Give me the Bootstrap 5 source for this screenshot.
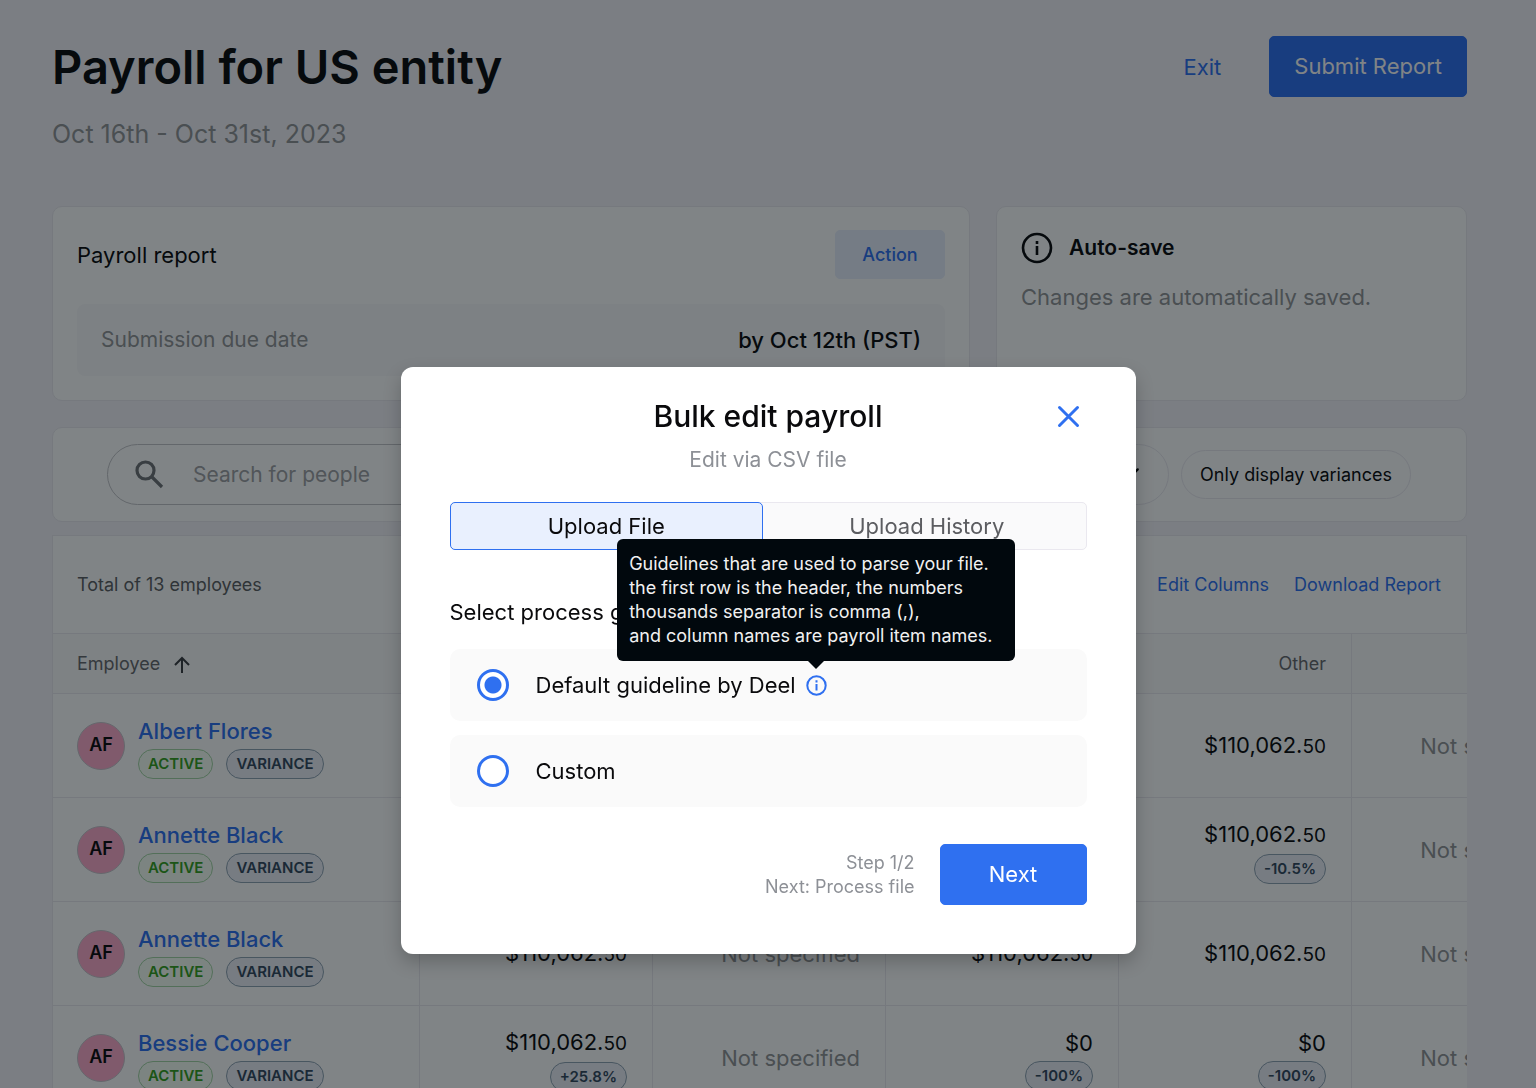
<!DOCTYPE html>
<html lang="en">
<head>
<meta charset="utf-8">
<meta name="viewport" content="width=device-width, initial-scale=1">
<title>Payroll for US entity</title>
<link href="https://cdn.jsdelivr.net/npm/bootstrap@5.3.0/dist/css/bootstrap.min.css" rel="stylesheet">
<style>
:root{--blue:#2f70f0;--line:#eae8ef;--muted:#939497;--ink:#0a0a0c}
body{font-family:Inter,"Liberation Sans",sans-serif;background:#f5f3f8;color:var(--ink);font-size:22px;line-height:24px;overflow:hidden}
a{color:var(--blue);text-decoration:none}
.page{padding:36px 69px 0 52px}
.page-title{font-size:47px;line-height:62px;font-weight:600;margin:0}
.period{font-size:25px;line-height:30px;color:var(--muted);margin:21px 0 57px}
.muted{color:var(--muted)}
.btn-main{--bs-btn-color:#fff;--bs-btn-bg:var(--blue);--bs-btn-border-color:var(--blue);--bs-btn-hover-bg:#1f5fdd;--bs-btn-hover-color:#fff;height:61px;font-size:22px;border-radius:5px;padding:0 24px}
.btn-soft{--bs-btn-color:var(--blue);--bs-btn-bg:#e8effc;--bs-btn-border-color:#e8effc;height:49px;width:110px;font-size:18px;font-weight:500;border-radius:5px}
.panel{background:#fff;border:1px solid var(--line);border-radius:10px}
.top-grid{display:grid;grid-template-columns:918fr 471fr;gap:26px}
.report-card{padding:23px 24px 24px}
.report-head{margin-bottom:25px}
.due-box{background:#f9f9fa;border-radius:8px;height:72px;padding:0 24px}
.due-box .muted{font-size:21px}
.note-card{padding:25px 24px 24px}
.note-title{font-size:21px;font-weight:600}
.note-text{margin:21px 0 0}
.find-bar{height:95px;padding:0 55px 0 54px;gap:12px;margin-top:26px}
.find-box{position:relative}
.find-box svg{position:absolute;left:26px;top:14px}
.find-box input{height:61px;border-radius:31px;border:1px solid #c4c4c8;padding:0 24px 0 85px;font-size:21px;background:#fff}
.find-box input::placeholder{color:#a0a1a4;opacity:1}
.pick{height:61px;width:250px;border-radius:31px;border-color:var(--line);padding-left:24px;font-size:18px;color:var(--ink);background-position:right 28px center;background-size:18px 18px;
--bs-form-select-bg-img:url("data:image/svg+xml,%3csvg xmlns='http://www.w3.org/2000/svg' viewBox='0 0 16 16'%3e%3cpath fill='none' stroke='%23000' stroke-width='2' stroke-linecap='round' d='m2 3 6 6 6-6'/%3e%3c/svg%3e")}
.pill{height:49px;border:1px solid var(--line);border-radius:25px;background:#fff;font-size:18px;padding:0 18px;color:var(--ink)}
.sheet{margin-top:13px;border:1px solid var(--line);border-right:0;background:#fff;overflow:hidden}
.sheet-top{height:97px;padding:0 25px 0 24px;gap:25px;font-size:18px;border-right:1px solid var(--line)}
.total{color:#5d5e62}
.pay{table-layout:fixed;width:1532px;border-collapse:separate;border-spacing:0}
.pay th{height:61px;background:#fafafb;font-weight:400;font-size:18px;color:#68696d;padding:0 25px 0 24px;border-top:1px solid var(--line);border-bottom:1px solid var(--line);border-right:1px solid var(--line);text-align:right}
.pay td{height:104px;padding:0 25px 0 24px;border-bottom:1px solid var(--line);border-right:1px solid var(--line);text-align:right;vertical-align:middle;line-height:36px}
.pay th:first-child,.pay td:first-child{text-align:left}
.cents{font-size:19px}
.person{gap:13px}
.tags{gap:13px}
.face{width:48px;height:48px;border-radius:50%;background:#ffabca;border:1px solid #c9c5cc;font-size:18px;font-weight:600;line-height:44px;text-align:center;flex:none}
.who{font-size:22px;font-weight:500;line-height:36px;display:block}
.chip{display:block;width:fit-content;height:30px;line-height:28px;border-radius:15px;border:1px solid #8fa2b3;background:#eceef6;color:#34495e;font-size:15px;font-weight:600;padding:0 9px}
.chip-on{border-color:#a5d5a5;background:#f6fff4;color:#36a01f}
.modal-backdrop{--bs-backdrop-bg:#01090d;--bs-backdrop-opacity:.5}
.edit-dialog{max-width:735px;margin:367px auto 0}
.edit-dialog .modal-content{border:0;border-radius:12px;padding:31px 49px 49px;box-shadow:0 8px 18px rgba(0,0,0,.22);color:var(--ink)}
.edit-title{font-size:30px;line-height:36px;font-weight:500;margin:0}
.edit-sub{font-size:21px;line-height:26px;margin:13px 0 29px;color:#8d9096}
.x-btn{position:absolute;right:56px;top:38px;width:23px;height:23px;border:0;background:none;padding:0;display:flex}
.tabs2{border:1px solid var(--line);border-radius:5px;background:#fafafb;height:48px}
.tabs2 button{flex:321 1 0;border:1px solid transparent;background:none;border-radius:5px;margin:-1px;color:#5c5d61;padding:0 0 0 6px}
.tabs2 button.on{flex-grow:315;padding:0;background:#e9f0fe;border-color:var(--blue);color:var(--ink)}
.ask{font-size:22px;line-height:26px;margin:49px 0 24px}
.choice{height:72px;border-radius:10px;background:#fafafa;padding:0 27px}
.choice + .choice{margin-top:14px}
.choice input{appearance:none;width:32px;height:32px;border:3px solid var(--blue);border-radius:50%;background:#fff;margin:0 27px 0 0;flex:none}
.choice input:checked{background:radial-gradient(circle,var(--blue) 0 8px,#fff 9px)}
.hint{position:relative;margin-left:10px;width:21px;height:21px;display:flex}
.hint-text{position:absolute;left:50%;bottom:35px;margin-left:-199px;width:398px;background:#01080d;color:#f1f1f1;border-radius:6px;padding:13px 12px;font-size:18px;line-height:24px;white-space:nowrap}
.hint-text::after{content:"";position:absolute;left:50%;top:100%;margin-left:-8px;border:8px solid transparent;border-top-color:#01080d;border-bottom:0}
.foot{margin-top:37px;gap:25px}
.step{font-size:18px;line-height:24px;text-align:right;color:#8d9096}
.foot .btn-main{width:147px}
</style>
</head>
<body>
<main class="page">
  <header class="d-flex justify-content-between align-items-start">
    <h1 class="page-title">Payroll for US entity</h1>
    <div class="d-flex align-items-center gap-5">
      <a href="#">Exit</a>
      <button type="button" class="btn btn-main">Submit Report</button>
    </div>
  </header>
  <p class="period">Oct 16th - Oct 31st, 2023</p>

  <div class="top-grid">
    <section class="panel report-card">
      <div class="report-head d-flex justify-content-between align-items-center">
        <span>Payroll report</span>
        <button type="button" class="btn btn-soft">Action</button>
      </div>
      <div class="due-box d-flex justify-content-between align-items-center">
        <span class="muted">Submission due date</span><span class="fw-medium due-day">by Oct 12th (PST)</span>
      </div>
    </section>
    <section class="panel note-card">
      <div class="d-flex align-items-center gap-3">
        <svg width="32" height="32" viewBox="0 0 32 32" fill="none" stroke="#0a0a0c" stroke-width="2.6"><circle cx="16" cy="16" r="14"/><path d="M16 14v9M16 9v3"/></svg>
        <span class="note-title">Auto-save</span>
      </div>
      <p class="muted note-text">Changes are automatically saved.</p>
    </section>
  </div>

  <section class="panel find-bar d-flex align-items-center">
    <div class="find-box flex-grow-1">
      <svg width="32" height="32" viewBox="0 0 32 32" fill="none" stroke="#707377" stroke-width="3.2"><circle cx="12.500" cy="12.500" r="8.500"/><path d="M18.500 18.500 29 29"/></svg>
      <input type="search" class="form-control" placeholder="Search for people" aria-label="Search for people">
    </div>
    <select class="form-select pick" aria-label="Filter"><option>All</option></select>
    <button type="button" class="pill">Only display variances</button>
  </section>

  <section class="sheet">
    <div class="sheet-top d-flex align-items-center">
      <span class="total me-auto">Total of 13 employees</span>
      <a href="#">Edit Columns</a><a href="#">Download Report</a>
    </div>
    <table class="pay">
      <colgroup><col style="width:367px"><col><col><col><col><col></colgroup>
      <thead><tr>
        <th>Employee <svg class="ms-2" width="18" height="18" viewBox="0 0 18 18" fill="none" stroke="#3b3c40" stroke-width="2"><path d="M9 17V2M2 9l7-7 7 7"/></svg></th>
        <th></th><th></th><th></th><th>Other</th><th></th>
      </tr></thead>
      <tbody>
      <tr><td><div class="d-flex align-items-center person"><div class="face">AF</div><div><a href="#" class="who">Albert Flores</a><div class="d-flex tags"><span class="chip chip-on">ACTIVE</span><span class="chip">VARIANCE</span></div></div></div></td>
        <td>$110,062.<span class="cents">50</span></td><td class="muted">Not specified</td><td>$110,062.<span class="cents">50</span></td><td>$110,062.<span class="cents">50</span></td><td class="muted">Not specified</td></tr>
      <tr><td><div class="d-flex align-items-center person"><div class="face">AF</div><div><a href="#" class="who">Annette Black</a><div class="d-flex tags"><span class="chip chip-on">ACTIVE</span><span class="chip">VARIANCE</span></div></div></div></td>
        <td>$110,062.<span class="cents">50</span></td><td class="muted">Not specified</td><td>$110,062.<span class="cents">50</span></td><td>$110,062.<span class="cents">50</span><span class="chip ms-auto">-10.5%</span></td><td class="muted">Not specified</td></tr>
      <tr><td><div class="d-flex align-items-center person"><div class="face">AF</div><div><a href="#" class="who">Annette Black</a><div class="d-flex tags"><span class="chip chip-on">ACTIVE</span><span class="chip">VARIANCE</span></div></div></div></td>
        <td>$110,062.<span class="cents">50</span></td><td class="muted">Not specified</td><td>$110,062.<span class="cents">50</span></td><td>$110,062.<span class="cents">50</span></td><td class="muted">Not specified</td></tr>
      <tr><td><div class="d-flex align-items-center person"><div class="face">AF</div><div><a href="#" class="who">Bessie Cooper</a><div class="d-flex tags"><span class="chip chip-on">ACTIVE</span><span class="chip">VARIANCE</span></div></div></div></td>
        <td>$110,062.<span class="cents">50</span><span class="chip ms-auto">+25.8%</span></td><td class="muted">Not specified</td><td>$0<span class="chip ms-auto">-100%</span></td><td>$0<span class="chip ms-auto">-100%</span></td><td class="muted">Not specified</td></tr>
      </tbody>
    </table>
  </section>
</main>

<div class="modal-backdrop show"></div>
<div class="modal d-block" tabindex="-1" role="dialog" aria-labelledby="editTitle">
  <div class="modal-dialog edit-dialog">
    <div class="modal-content">
      <button type="button" class="x-btn" aria-label="Close"><svg width="23" height="23" viewBox="0 0 23 23" stroke="#2f70f0" stroke-width="3" stroke-linecap="round"><path d="M2.500 2.500 20.500 20.500M20.500 2.500 2.500 20.500"/></svg></button>
      <h2 class="edit-title text-center" id="editTitle">Bulk edit payroll</h2>
      <p class="edit-sub text-center">Edit via CSV file</p>
      <div class="tabs2 d-flex" role="tablist">
        <button type="button" class="on" role="tab" aria-selected="true">Upload File</button>
        <button type="button" role="tab" aria-selected="false">Upload History</button>
      </div>
      <p class="ask">Select process guideline</p>
      <div class="choice d-flex align-items-center">
        <input type="radio" name="guide" id="g1" checked><label for="g1">Default guideline by Deel</label>
        <span class="hint"><svg width="21" height="21" viewBox="0 0 21 21" fill="none" stroke="#2f70f0" stroke-width="2"><circle cx="10.500" cy="10.500" r="9.200"/><path d="M10.500 9v6.500M10.500 5.300v2.200"/></svg>
          <span class="hint-text" role="tooltip">Guidelines that are used to parse your file.<br>the first row is the header, the numbers<br>thousands separator is comma (,),<br>and column names are payroll item names.</span></span>
      </div>
      <div class="choice d-flex align-items-center">
        <input type="radio" name="guide" id="g2"><label for="g2">Custom</label>
      </div>
      <div class="foot d-flex justify-content-end align-items-center">
        <div class="step">Step 1/2<br>Next: Process file</div>
        <button type="button" class="btn btn-main">Next</button>
      </div>
    </div>
  </div>
</div>
<script src="https://cdn.jsdelivr.net/npm/bootstrap@5.3.0/dist/js/bootstrap.bundle.min.js"></script>
</body>
</html>
